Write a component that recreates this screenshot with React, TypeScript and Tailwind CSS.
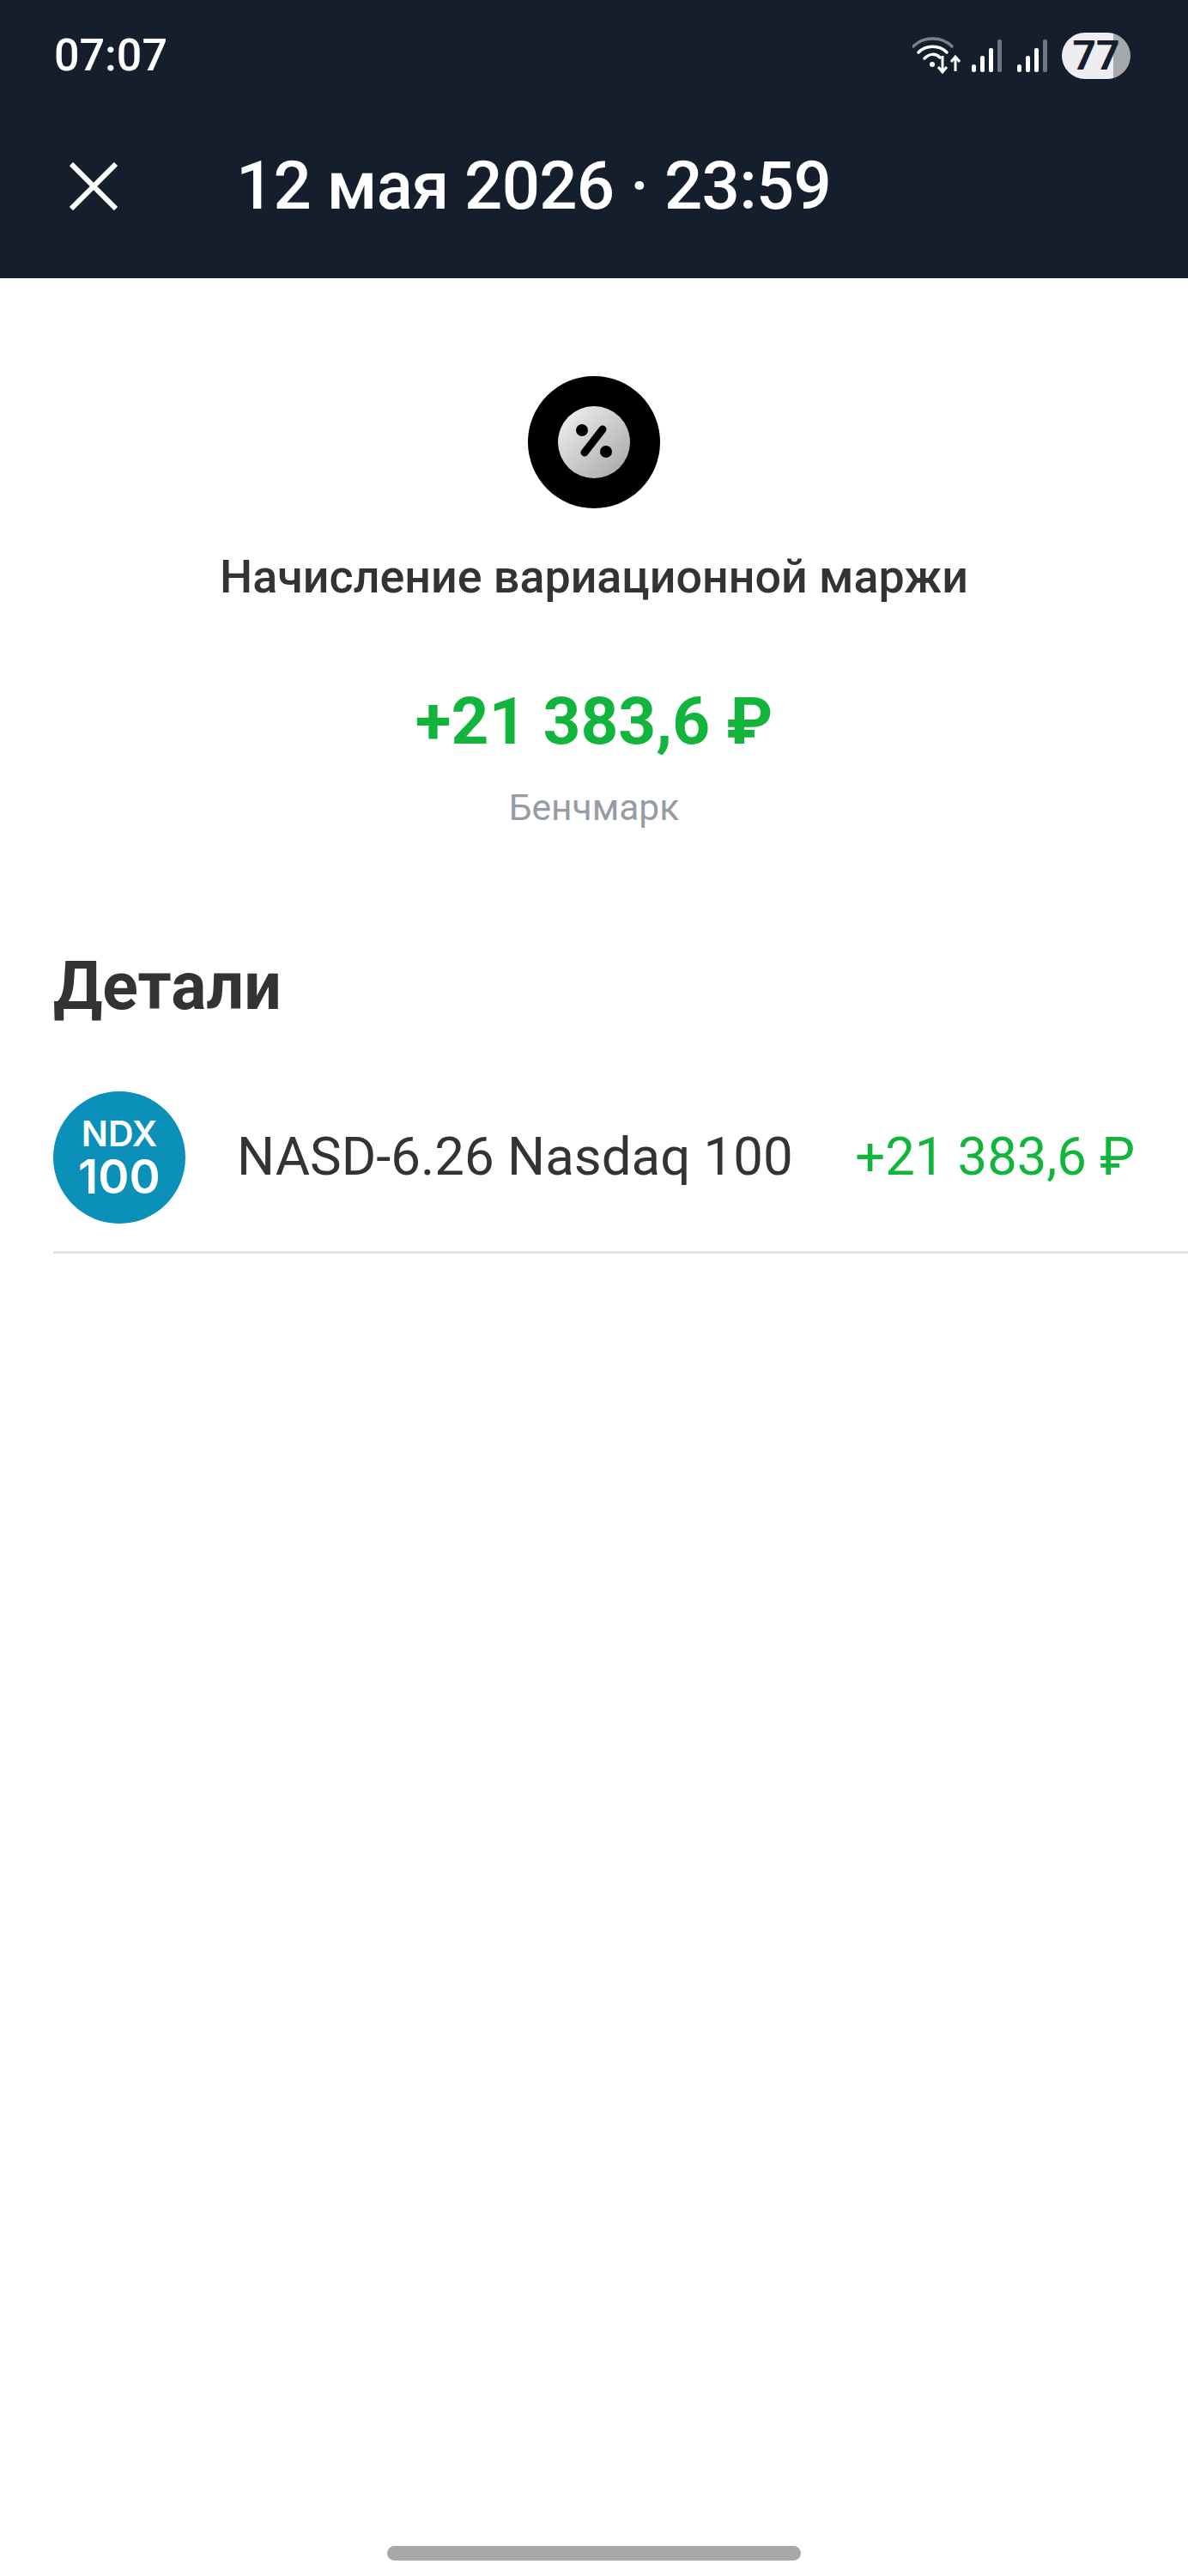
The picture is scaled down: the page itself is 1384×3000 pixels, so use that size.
function CloseIcon() {
  return (
    <svg width="56" height="56" viewBox="0 0 56 56" fill="none" className="shrink-0">
      <path d="M2 2L54 54M54 2L2 54" stroke="white" strokeWidth="6" />
    </svg>
  );
}

function WifiIcon() {
  return (
    <svg width="56" height="44" viewBox="0 0 56 44" fill="none">
      <path d="M1 11C13 -1 34 -1 46 11" stroke="#7c828c" strokeWidth="3.5" strokeLinecap="round" />
      <path d="M7 18C16 9 31 9 40 18" stroke="white" strokeWidth="3.5" strokeLinecap="round" />
      <path d="M14 25C20 19 27 19 32 24" stroke="white" strokeWidth="3.5" strokeLinecap="round" />
      <circle cx="23" cy="32" r="3" fill="white" />
      <path d="M35 22V40M30 35L35 41L40 35" stroke="white" strokeWidth="3" />
      <path d="M50 40V24M45 29L50 23L55 29" stroke="white" strokeWidth="3" />
    </svg>
  );
}

function SignalIcon() {
  return (
    <svg width="35" height="38" viewBox="0 0 35 38" fill="none">
      <rect x="0" y="29" width="5" height="9" rx="2.5" fill="white" />
      <rect x="10" y="19" width="5" height="19" rx="2" fill="white" />
      <rect x="20" y="10" width="5" height="28" rx="2" fill="white" />
      <rect x="30" y="0" width="5" height="38" rx="2" fill="#6f7681" />
    </svg>
  );
}

function PercentBadge() {
  return (
    <svg width="154" height="154" viewBox="0 0 154 154">
      <defs>
        <linearGradient id="badge" x1="0" y1="0" x2="1" y2="1">
          <stop offset="0" stopColor="#f4f4f4" />
          <stop offset="1" stopColor="#a4a4a4" />
        </linearGradient>
      </defs>
      <circle cx="77" cy="77" r="77" fill="#000" />
      <circle cx="77" cy="77" r="42" fill="url(#badge)" />
      <circle cx="63" cy="63" r="7" fill="#000" />
      <circle cx="91" cy="88" r="7" fill="#000" />
      <path d="M87 62L66 89" stroke="#000" strokeWidth="9" strokeLinecap="round" />
    </svg>
  );
}

export default function App() {
  return (
    <div className="flex h-[3000px] w-[1384px] flex-col bg-white font-['Roboto',sans-serif] text-[#333333]">
      {/* Header */}
      <header className="h-[324px] bg-[#151e2d] text-white">
        <div className="flex h-[130px] items-center justify-between pl-[63px] pr-[67px]">
          <span className="text-[52px] leading-none font-medium">07:07</span>
          <div className="flex items-center">
            <WifiIcon />
            <div className="ml-[13px]">
              <SignalIcon />
            </div>
            <div className="ml-[18px]">
              <SignalIcon />
            </div>
            <div className="ml-[17px] flex h-[54px] w-[80px] items-center justify-center rounded-full bg-[linear-gradient(90deg,#eceef2_75%,#a6a8ad_75%)]">
              <span className="text-[48px] leading-none font-bold text-[#151e2d]">77</span>
            </div>
          </div>
        </div>
        <div className="flex items-center pt-[34px] pl-[81px]">
          <CloseIcon />
          <h1 className="ml-[138px] text-[78px] leading-[106px] font-medium tracking-[-0.75px] whitespace-nowrap">12 мая 2026 · 23:59</h1>
        </div>
      </header>

      {/* Summary */}
      <section className="flex flex-col items-center pt-[114px]">
        <PercentBadge />
        <p className="mt-[48px] text-[53.8px] leading-[64px] font-medium">Начисление вариационной маржи</p>
        <p className="mt-[91px] text-[76.6px] leading-[90px] font-bold text-[#12b53c]">+21 383,6 ₽</p>
        <p className="mt-[32px] text-[42.5px] leading-[48px] text-[#959ca5]">Бенчмарк</p>
      </section>

      {/* Details */}
      <section className="pt-[142px] pl-[62px]">
        <h2 className="text-[77px] leading-[84px] font-bold">Детали</h2>
        <div className="mt-[80px] flex items-center pr-[62px] pb-[32px]">
          <div className="flex h-[154px] w-[154px] shrink-0 flex-col items-center justify-center rounded-full bg-[#0b90b9] font-['Inter',sans-serif] font-semibold text-white">
            <span className="text-[41px] leading-[44px]">NDX</span>
            <span className="text-[55px] leading-[56px]">100</span>
          </div>
          <span className="ml-[60px] text-[61.8px] leading-none whitespace-nowrap">NASD-6.26 Nasdaq 100</span>
          <span className="ml-auto text-[61.5px] leading-none whitespace-nowrap text-[#12b53c]">+21 383,6 ₽</span>
        </div>
        <div className="h-[3px] bg-[#e2e3e6]" />
      </section>

      {/* Home indicator */}
      <div className="mt-auto flex justify-center pb-[18px]">
        <div className="h-[17px] w-[482px] rounded-full bg-[#a8a8a8]" />
      </div>
    </div>
  );
}
